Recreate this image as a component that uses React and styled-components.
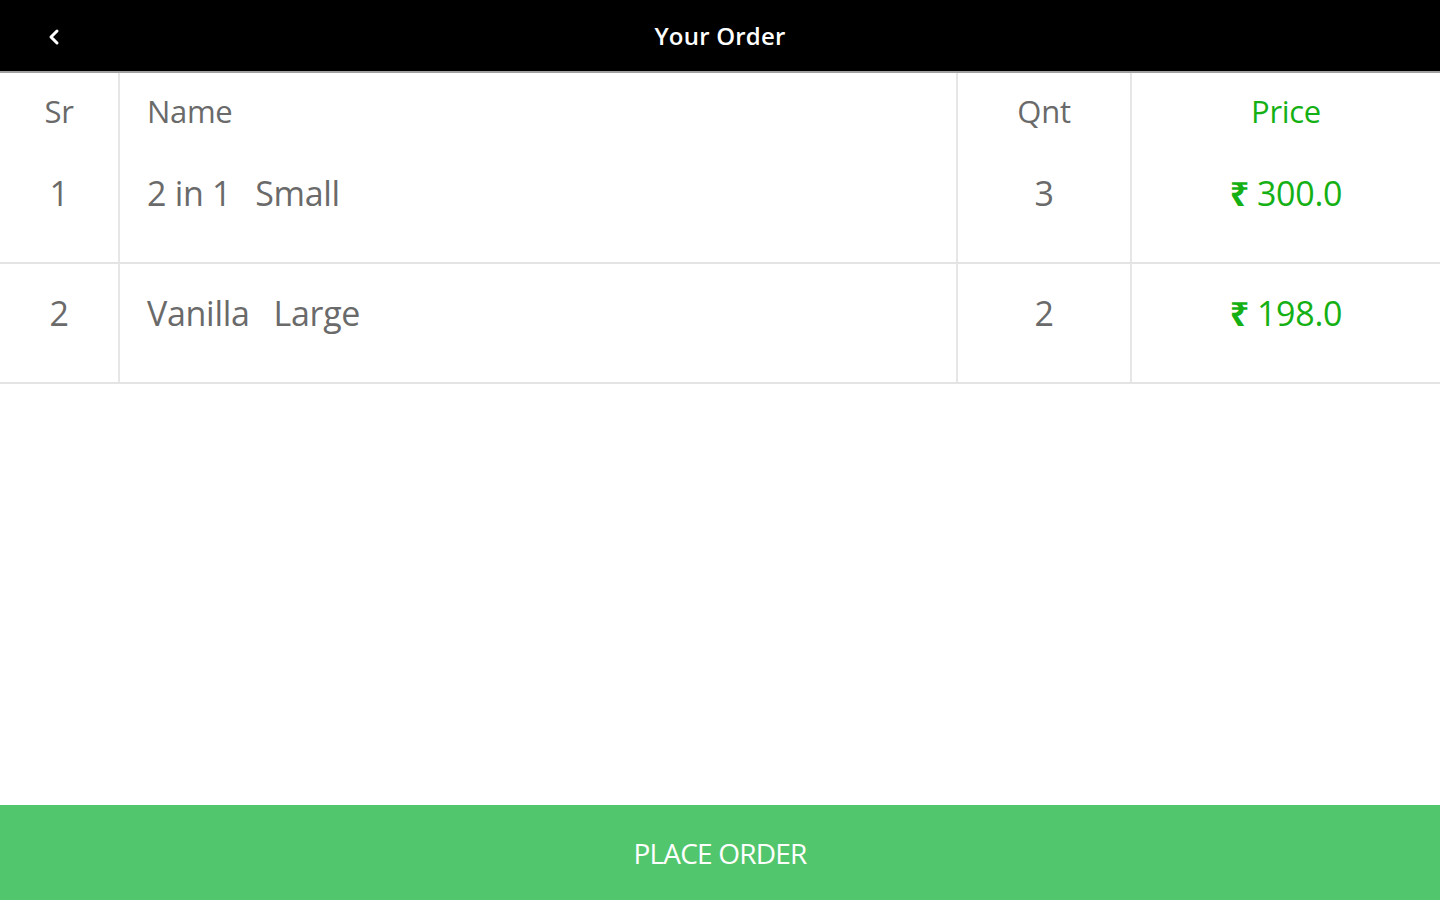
import React from "react";
import styled, { createGlobalStyle } from "styled-components";

const GlobalStyle = createGlobalStyle`
  html, body {
    margin: 0;
    padding: 0;
    height: 100%;
    background: #ffffff;
    font-family: "Open Sans", "Noto Sans", sans-serif;
  }
  #root {
    height: 100%;
  }
`;

const items = [
  { sr: 1, name: "2 in 1", size: "Small", qnt: 3, price: "300.0" },
  { sr: 2, name: "Vanilla", size: "Large", qnt: 2, price: "198.0" },
];

export default function App() {
  return (
    <>
      <GlobalStyle />
      <Page>
        <TopBar>
          <BackButton aria-label="Back">
            <svg width="14" height="18" viewBox="0 0 14 18">
              <path
                d="M10 3 L4 9 L10 15"
                fill="none"
                stroke="#ffffff"
                strokeWidth="3"
                strokeLinecap="round"
                strokeLinejoin="round"
              />
            </svg>
          </BackButton>
          <Title>Your Order</Title>
        </TopBar>

        <Table>
          <HeadRow>
            <Cell $align="center">Sr</Cell>
            <Cell $pad>Name</Cell>
            <Cell $align="center">Qnt</Cell>
            <Cell $align="center" $green>
              Price
            </Cell>
          </HeadRow>
          {items.map((item) => (
            <Row key={item.sr}>
              <Cell $align="center">{item.sr}</Cell>
              <Cell $pad>
                {item.name}
                <Gap />
                {item.size}
              </Cell>
              <Cell $align="center">{item.qnt}</Cell>
              <Cell $align="center" $green>
                <Rupee>₹</Rupee>
                {item.price}
              </Cell>
            </Row>
          ))}
        </Table>

        <Spacer />

        <PlaceOrder>PLACE ORDER</PlaceOrder>
      </Page>
    </>
  );
}

const Page = styled.div`
  height: 100vh;
  display: flex;
  flex-direction: column;
`;

const TopBar = styled.header`
  height: 71px;
  flex-shrink: 0;
  background: #000000;
  border-bottom: 2px solid #a0a0a0;
  display: flex;
  align-items: center;
  justify-content: center;
  position: relative;
`;

const BackButton = styled.button`
  position: absolute;
  left: 47px;
  top: 28px;
  background: none;
  border: 0;
  padding: 0;
  display: flex;
`;

const Title = styled.h1`
  margin: 0;
  color: #ffffff;
  font-size: 24px;
  font-weight: 600;
  letter-spacing: 0.2px;
`;

const Table = styled.div`
  display: flex;
  flex-direction: column;
`;

const columns = "120px 838px 174px 1fr";

const HeadRow = styled.div`
  display: grid;
  grid-template-columns: ${columns};
  height: 71px;
  font-size: 31px;

  & > div {
    padding-top: 15px;
  }
`;

const Row = styled.div`
  display: grid;
  grid-template-columns: ${columns};
  height: 118px;
  font-size: 34px;
  border-bottom: 2px solid #e4e4e4;

  & > div {
    padding-top: 26px;
  }
`;

const Cell = styled.div`
  color: ${(p) => (p.$green ? "#14b014" : "#6a6a6a")};
  text-align: ${(p) => p.$align || "left"};
  padding-left: ${(p) => (p.$pad ? "27px" : "0")};
  border-right: 2px solid #e6e6e6;
  line-height: 46px;
  letter-spacing: -0.3px;
  box-sizing: border-box;

  &:last-child {
    border-right: 0;
  }
`;

const Rupee = styled.span`
  font-weight: 700;
  margin-right: 8px;
`;

const Gap = styled.span`
  display: inline-block;
  width: 24px;
`;

const Spacer = styled.div`
  flex: 1;
`;

const PlaceOrder = styled.button`
  height: 95px;
  flex-shrink: 0;
  border: 0;
  background: #52c66c;
  color: #ffffff;
  font-family: "Open Sans", "Noto Sans", sans-serif;
  font-size: 28px;
  letter-spacing: -0.8px;
  width: 100%;
`;
